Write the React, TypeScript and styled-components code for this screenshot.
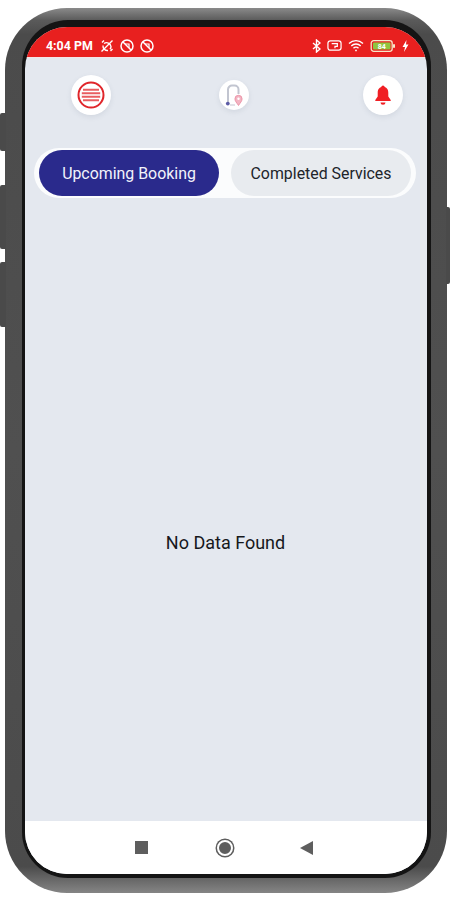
import React from 'react';
import styled, { createGlobalStyle } from 'styled-components';

const GlobalStyle = createGlobalStyle`
  html, body {
    margin: 0;
    padding: 0;
    width: 450px;
    height: 900px;
    overflow: hidden;
    background: #ffffff;
    font-family: Roboto, "Liberation Sans", sans-serif;
  }
`;

const Page = styled.div`
  width: 450px;
  height: 900px;
  padding: 8px 3px 7px 5px;
  box-sizing: border-box;
  position: relative;
`;

// Hardware keys lie over the page edge, next to the phone body
const SideKey = styled.div<{ $top: number; $height: number; $right?: boolean }>`
  position: absolute;
  top: ${(p) => p.$top}px;
  height: ${(p) => p.$height}px;
  width: ${(p) => (p.$right ? 4 : 6)}px;
  ${(p) => (p.$right ? 'right: 0;' : 'left: 0;')}
  background: #4a4a4a;
  border-radius: ${(p) => (p.$right ? '0 2px 2px 0' : '2px 0 0 2px')};
`;

const PhoneBody = styled.div`
  height: 100%;
  box-sizing: border-box;
  padding: 12px 16px 15px 17px;
  border-radius: 62px;
  background: linear-gradient(180deg, #8a8a8a 0%, #5a5a5a 1.4%, #4b4b4b 3%, #505050 50%, #4b4b4b 97%, #858585 100%);
`;

const InnerBezel = styled.div`
  height: 100%;
  box-sizing: border-box;
  padding: 7px 4px 4px 3px;
  border-radius: 46px;
  background: #141414;
`;

const Screen = styled.div`
  height: 100%;
  display: flex;
  flex-direction: column;
  overflow: hidden;
  border-radius: 42px;
  background: #e4e8ef;
`;

const StatusBar = styled.div`
  flex: 0 0 31px;
  box-sizing: border-box;
  display: flex;
  align-items: center;
  justify-content: space-between;
  padding: 7px 18px 0 21px;
  background: #e8201f;
  border-bottom: 1px solid #f3e6e8;
  color: #ffffff;
`;

const StatusGroup = styled.div`
  display: flex;
  align-items: center;
  gap: 6px;
`;

const Clock = styled.span`
  font-size: 12.4px;
  font-weight: 700;
  margin-right: 1px;
  white-space: nowrap;
`;

const Content = styled.div`
  flex: 1;
  display: flex;
  flex-direction: column;
  min-height: 0;
`;

const Header = styled.div`
  display: flex;
  align-items: center;
  height: 40px;
  padding: 17px 0 0 46px;
`;

const RoundButton = styled.div<{ $size: number; $offset?: number }>`
  width: ${(p) => p.$size}px;
  height: ${(p) => p.$size}px;
  margin-left: ${(p) => p.$offset ?? 0}px;
  flex: none;
  display: flex;
  align-items: center;
  justify-content: center;
  border-radius: 50%;
  background: #ffffff;
  box-shadow: 0 2px 5px rgba(120, 130, 150, 0.16);
`;

const Tabs = styled.div`
  display: flex;
  justify-content: space-between;
  align-items: center;
  height: 50px;
  box-sizing: border-box;
  margin: 33px 11px 0 9px;
  padding: 0 5px;
  border-radius: 25px;
  background: #fbfcfd;
`;

const Tab = styled.div<{ $active?: boolean }>`
  width: 180px;
  height: 46px;
  display: flex;
  align-items: center;
  justify-content: center;
  border-radius: 23px;
  font-size: 15.9px;
  background: ${(p) => (p.$active ? '#2a2a8c' : '#e8ebef')};
  color: ${(p) => (p.$active ? '#f2f3fb' : '#20242a')};
`;

const EmptyState = styled.div`
  flex: 1;
  display: flex;
  align-items: center;
  justify-content: center;
  padding: 65px 1px 0 0;
  font-size: 18px;
  color: #16181c;
`;

const NavBar = styled.div`
  flex: 0 0 53px;
  display: flex;
  align-items: center;
  padding-left: 110px;
  box-sizing: border-box;
  background: #ffffff;
`;

const NavSquare = styled.div`
  width: 13px;
  height: 13px;
  background: #5e5e5e;
`;

const NavCircle = styled.div`
  width: 12px;
  height: 12px;
  margin-left: 69px;
  border-radius: 50%;
  background: #5e5e5e;
  border: 2px solid #ffffff;
  box-shadow: 0 0 0 1.5px #5e5e5e;
`;

const NavBack = styled.div`
  width: 0;
  height: 0;
  margin-left: 67px;
  border-style: solid;
  border-width: 7px 13px 7px 0;
  border-color: transparent #5e5e5e transparent transparent;
`;

const MuteIcon = () => (
  <svg width="14" height="14" viewBox="0 0 14 14" fill="none" stroke="#fff" strokeWidth="1.5">
    <circle cx="7" cy="7" r="6" />
    <path d="M3 3l8 8" />
    <path d="M5 5h4v4" strokeWidth="1.2" />
  </svg>
);

const AlarmOffIcon = () => (
  <svg width="14" height="14" viewBox="0 0 14 14" fill="none" stroke="#fff" strokeWidth="1.4">
    <path d="M4 4.5A4.5 4.5 0 0 1 11 7.5a4.5 4.5 0 0 1-1 2.8M3 6.5a4.5 4.5 0 0 0 5 5" />
    <path d="M1.5 12.5l11-11M2 3.5L4 1.5M10.5 12l2-2" />
  </svg>
);

const BluetoothIcon = () => (
  <svg width="9" height="14" viewBox="0 0 9 14" fill="none" stroke="#fff" strokeWidth="1.4">
    <path d="M1 4l7 6-3.5 3V1L8 4l-7 6" />
  </svg>
);

const VolteIcon = () => (
  <svg width="15" height="13" viewBox="0 0 16 13" fill="none" stroke="#fff" strokeWidth="1.3">
    <rect x="1" y="1.5" width="14" height="10" rx="2.5" />
    <path d="M5 4.5h6v3H8.5v2" />
  </svg>
);

const WifiIcon = () => (
  <svg width="16" height="13" viewBox="0 0 16 13" fill="none" stroke="#fff" strokeWidth="1.4">
    <path d="M1 4.5a10 10 0 0 1 14 0M3.3 7a6.6 6.6 0 0 1 9.4 0M5.5 9.2a3.4 3.4 0 0 1 5 0" />
    <circle cx="8" cy="11.4" r="0.9" fill="#fff" stroke="none" />
  </svg>
);

const BatteryIcon = () => (
  <svg width="26" height="12" viewBox="0 0 25 12">
    <rect x="0.7" y="0.7" width="21" height="10.6" rx="2.5" fill="none" stroke="#f6e7c8" strokeWidth="1.3" />
    <rect x="2.5" y="2.5" width="17.5" height="7" rx="1" fill="#8fc63f" />
    <rect x="22.5" y="4" width="2" height="4" rx="1" fill="#f6e7c8" />
    <text x="11.2" y="8.6" textAnchor="middle" fontSize="7" fontWeight="700" fontFamily="Roboto, sans-serif" fill="#fff">
      84
    </text>
  </svg>
);

const ChargeIcon = () => (
  <svg width="7" height="12" viewBox="0 0 7 12" fill="#fff">
    <path d="M4.5 0L0.5 7h2.5L2 12l4.5-7.5H4z" />
  </svg>
);

const MenuIcon = () => (
  <svg width="28" height="28" viewBox="0 0 28 28" fill="none" stroke="#e0262b">
    <circle cx="14" cy="14" r="12.5" strokeWidth="2" />
    <path d="M6 8.7h16M4.8 12.2h18.4M4.8 15.8h18.4M6 19.3h16" strokeWidth="2" opacity="0.75" />
  </svg>
);

const RouteIcon = () => (
  <svg width="22" height="24" viewBox="0 0 22 24" fill="none">
    <path d="M5 20V6.5a4 4 0 0 1 4-4h2.500a4 4 0 0 1 4 4V11" stroke="#c2c5d0" strokeWidth="2" />
    <path d="M7 22h5" stroke="#d7d9e0" strokeWidth="1.400" />
    <circle cx="4.800" cy="20.600" r="1.900" fill="#5c5ca6" />
    <path d="M15.500 22.500c-2-3-3.600-4.600-3.600-6.600a3.600 3.600 0 0 1 7.200 0c0 2-1.600 3.600-3.600 6.600z" fill="#f3b4c2" stroke="#e88aa0" strokeWidth="0.800" />
    <circle cx="15.500" cy="15.800" r="1.200" fill="#fff" />
  </svg>
);

const BellIcon = () => (
  <svg width="18" height="20" viewBox="0 0 18 20" fill="#f01f24">
    <circle cx="9" cy="2" r="1.600" />
    <path d="M9 1.800c3.400 0 5.300 2.600 5.300 5.900v3.800l2.400 3.600v1H1.300v-1l2.400-3.600V7.700c0-3.300 1.900-5.900 5.300-5.900z" />
    <path d="M6.500 17.500h5a2.500 2.200 0 0 1-5 0z" />
  </svg>
);

export default function App() {
  return (
    <>
      <GlobalStyle />
      <Page>
        <SideKey $top={113} $height={38} />
        <SideKey $top={185} $height={64} />
        <SideKey $top={262} $height={65} />
        <SideKey $right $top={207} $height={77} />
        <PhoneBody>
          <InnerBezel>
            <Screen>
              <StatusBar>
                <StatusGroup>
                  <Clock>4:04 PM</Clock>
                  <AlarmOffIcon />
                  <MuteIcon />
                  <MuteIcon />
                </StatusGroup>
                <StatusGroup>
                  <BluetoothIcon />
                  <VolteIcon />
                  <WifiIcon />
                  <BatteryIcon />
                  <ChargeIcon />
                </StatusGroup>
              </StatusBar>
              <Content>
                <Header>
                  <RoundButton $size={40}>
                    <MenuIcon />
                  </RoundButton>
                  <RoundButton $size={30} $offset={108}>
                    <RouteIcon />
                  </RoundButton>
                  <RoundButton $size={40} $offset={114}>
                    <BellIcon />
                  </RoundButton>
                </Header>
                <Tabs>
                  <Tab $active>Upcoming Booking</Tab>
                  <Tab>Completed Services</Tab>
                </Tabs>
                <EmptyState>No Data Found</EmptyState>
              </Content>
              <NavBar>
                <NavSquare />
                <NavCircle />
                <NavBack />
              </NavBar>
            </Screen>
          </InnerBezel>
        </PhoneBody>
      </Page>
    </>
  );
}
